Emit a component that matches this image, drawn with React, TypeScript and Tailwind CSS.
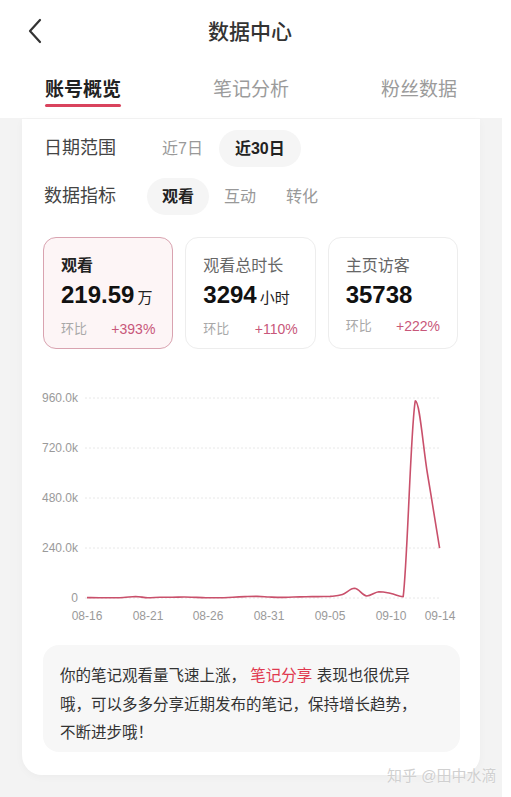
import React from 'react';

const font = "font-['Liberation_Sans','Noto_Sans_CJK_SC',sans-serif]";

// daily views in thousands, 08-16 .. 09-14
const views = [
  2, 1, 1, 2.4, 7.2, 1, 3.4, 3.8, 4.8, 2.9, 1, 1, 3.8, 6.7, 7.7, 4.8, 2.9, 4.8, 6.2, 6.7,
  7.7, 16.8, 46.6, 9.6, 30.2, 21.6, 6.2, 946, 595, 239,
];

const metrics = [
  { label: '观看', value: '219.59', unit: '万', rate: '+393%', active: true },
  { label: '观看总时长', value: '3294', unit: '小时', rate: '+110%' },
  { label: '主页访客', value: '35738', unit: '', rate: '+222%' },
];

const clamp = (v: number, a: number, b: number) => Math.min(Math.max(v, Math.min(a, b)), Math.max(a, b));

function smoothPath(pts: [number, number][]) {
  let d = `M${pts[0][0]},${pts[0][1]}`;
  for (let i = 0; i < pts.length - 1; i++) {
    const p0 = pts[i - 1] || pts[i];
    const p1 = pts[i];
    const p2 = pts[i + 1];
    const p3 = pts[i + 2] || p2;
    const t = 0.18;
    const c1x = p1[0] + (p2[0] - p0[0]) * t;
    const c1y = clamp(p1[1] + (p2[1] - p0[1]) * t, p1[1], p2[1]);
    const c2x = p2[0] - (p3[0] - p1[0]) * t;
    const c2y = clamp(p2[1] - (p3[1] - p1[1]) * t, p1[1], p2[1]);
    d += ` C${c1x.toFixed(1)},${c1y.toFixed(1)} ${c2x.toFixed(1)},${c2y.toFixed(1)} ${p2[0].toFixed(1)},${p2[1].toFixed(1)}`;
  }
  return d;
}

function Chart() {
  const x0 = 65;
  const step = 12.16;
  const base = 218;
  const pts = views.map((v, i) => [x0 + i * step, base - (v / 960) * 200] as [number, number]);
  const yTicks = ['960.0k', '720.0k', '480.0k', '240.0k', '0'];
  const xTicks = ['08-16', '08-21', '08-26', '08-31', '09-05', '09-10', '09-14'];
  const xPos = [65, 126, 186, 247, 308, 369, 418];

  return (
    <svg width="458" height="245" viewBox="0 0 458 245" className="block mt-[31px]">
      {yTicks.map((t, i) => (
        <g key={t}>
          <line x1="63" x2="418" y1={18 + i * 50} y2={18 + i * 50} stroke="#e8e8e8" strokeWidth="1" strokeDasharray="2 2" />
          <text x="56" y={22 + i * 50} textAnchor="end" fontSize="12" fill="#9a9a9a" fontFamily="Liberation Sans, sans-serif">
            {t}
          </text>
        </g>
      ))}
      {xTicks.map((t, i) => (
        <text key={t} x={xPos[i]} y="240" textAnchor="middle" fontSize="12" fill="#9a9a9a" fontFamily="Liberation Sans, sans-serif">
          {t}
        </text>
      ))}
      <path d={smoothPath(pts)} fill="none" stroke="#c9506b" strokeWidth="1.6" strokeLinejoin="round" />
    </svg>
  );
}

export default function App() {
  return (
    <div className={`${font} relative w-[511px] h-[797px] bg-white overflow-hidden text-[#333]`}>
      <div className="h-[62px] flex items-center">
        <svg width="16" height="26" viewBox="0 0 16 26" className="ml-[28px]">
          <polyline points="12,2 2,13 12,24" fill="none" stroke="#333" strokeWidth="2.2" strokeLinecap="round" strokeLinejoin="round" />
        </svg>
        <div className="ml-[164px] text-[21px] font-medium text-[#333] leading-none">数据中心</div>
      </div>

      <div className="h-[56px] flex pl-[45px] gap-[92px] pt-[15px]">
        <div className="flex flex-col">
          <span className="text-[19px] leading-[26px] font-bold text-[#222]">账号概览</span>
          <span className="mt-[1px] h-[3px] rounded-full bg-[#d9435d]" />
        </div>
        <span className="text-[19px] leading-[26px] text-[#9b9b9b]">笔记分析</span>
        <span className="text-[19px] leading-[26px] text-[#9b9b9b]">粉丝数据</span>
      </div>

      <div className="w-[502px] h-[679px] bg-[#f3f3f3] pt-px">
        <div className="ml-[22px] w-[458px] h-[656px] bg-white rounded-b-[20px] shadow-[0_2px_8px_rgba(0,0,0,0.03)] pt-[11px]">
          <div className="flex items-center pl-[22px]">
            <span className="text-[18px] text-[#444] w-[96px]">日期范围</span>
            <div className="flex ml-[6px]">
              <span className="h-[37px] px-[16px] flex items-center text-[16px] text-[#999]">近7日</span>
              <span className="h-[37px] px-[16px] flex items-center text-[16px] font-bold text-[#222] bg-[#f5f5f5] rounded-full">近30日</span>
            </div>
          </div>
          <div className="flex items-center pl-[22px] mt-[11px]">
            <span className="text-[18px] text-[#444] w-[96px]">数据指标</span>
            <div className="flex ml-[7px]">
              <span className="h-[37px] px-[15px] flex items-center text-[16px] font-bold text-[#222] bg-[#f5f5f5] rounded-full">观看</span>
              <span className="h-[37px] px-[15px] flex items-center text-[16px] text-[#999]">互动</span>
              <span className="h-[37px] px-[15px] flex items-center text-[16px] text-[#999]">转化</span>
            </div>
          </div>

          <div className="grid grid-cols-3 gap-[12px] ml-[21px] mr-[22px] mt-[22px]">
            {metrics.map((m) => (
              <div
                key={m.label}
                className={`h-[112px] rounded-[13px] border pl-[17px] pr-[17px] pt-[18px] ${
                  m.active ? 'border-[#d9a3b0] bg-[#fdf5f6]' : 'border-[#ededed] bg-white'
                }`}
              >
                <div className={`text-[16px] leading-[20px] ${m.active ? 'font-bold text-[#222]' : 'text-[#666]'}`}>{m.label}</div>
                <div className="mt-[5px] flex items-baseline leading-[28px]">
                  <span className="text-[24px] font-bold text-[#111]">{m.value}</span>
                  {m.unit && <span className="ml-[3px] text-[15px] text-[#222]">{m.unit}</span>}
                </div>
                <div className="mt-[8px] flex items-center justify-between leading-[18px]">
                  <span className="text-[13px] text-[#a8a8a8]">环比</span>
                  <span className="text-[14px] text-[#c8577a]">{m.rate}</span>
                </div>
              </div>
            ))}
          </div>

          <Chart />

          <p className="mt-[20px] ml-[21px] w-[417px] h-[107px] rounded-[16px] bg-[#f7f7f7] pl-[17px] pr-[30px] pt-[17px] text-[15.5px] leading-[28.5px] text-[#333]">
            你的笔记观看量飞速上涨， <span className="text-[#e0394f]">笔记分享</span> 表现也很优异哦，可以多多分享近期发布的笔记，保持增长趋势，不断进步哦！
          </p>
        </div>
      </div>

      <div className="absolute left-[387px] top-[765px] text-[15px] text-[#d0d0d0] [text-shadow:0_0_2px_rgba(255,255,255,0.9)]">
        知乎 @田中水滴
      </div>
    </div>
  );
}
